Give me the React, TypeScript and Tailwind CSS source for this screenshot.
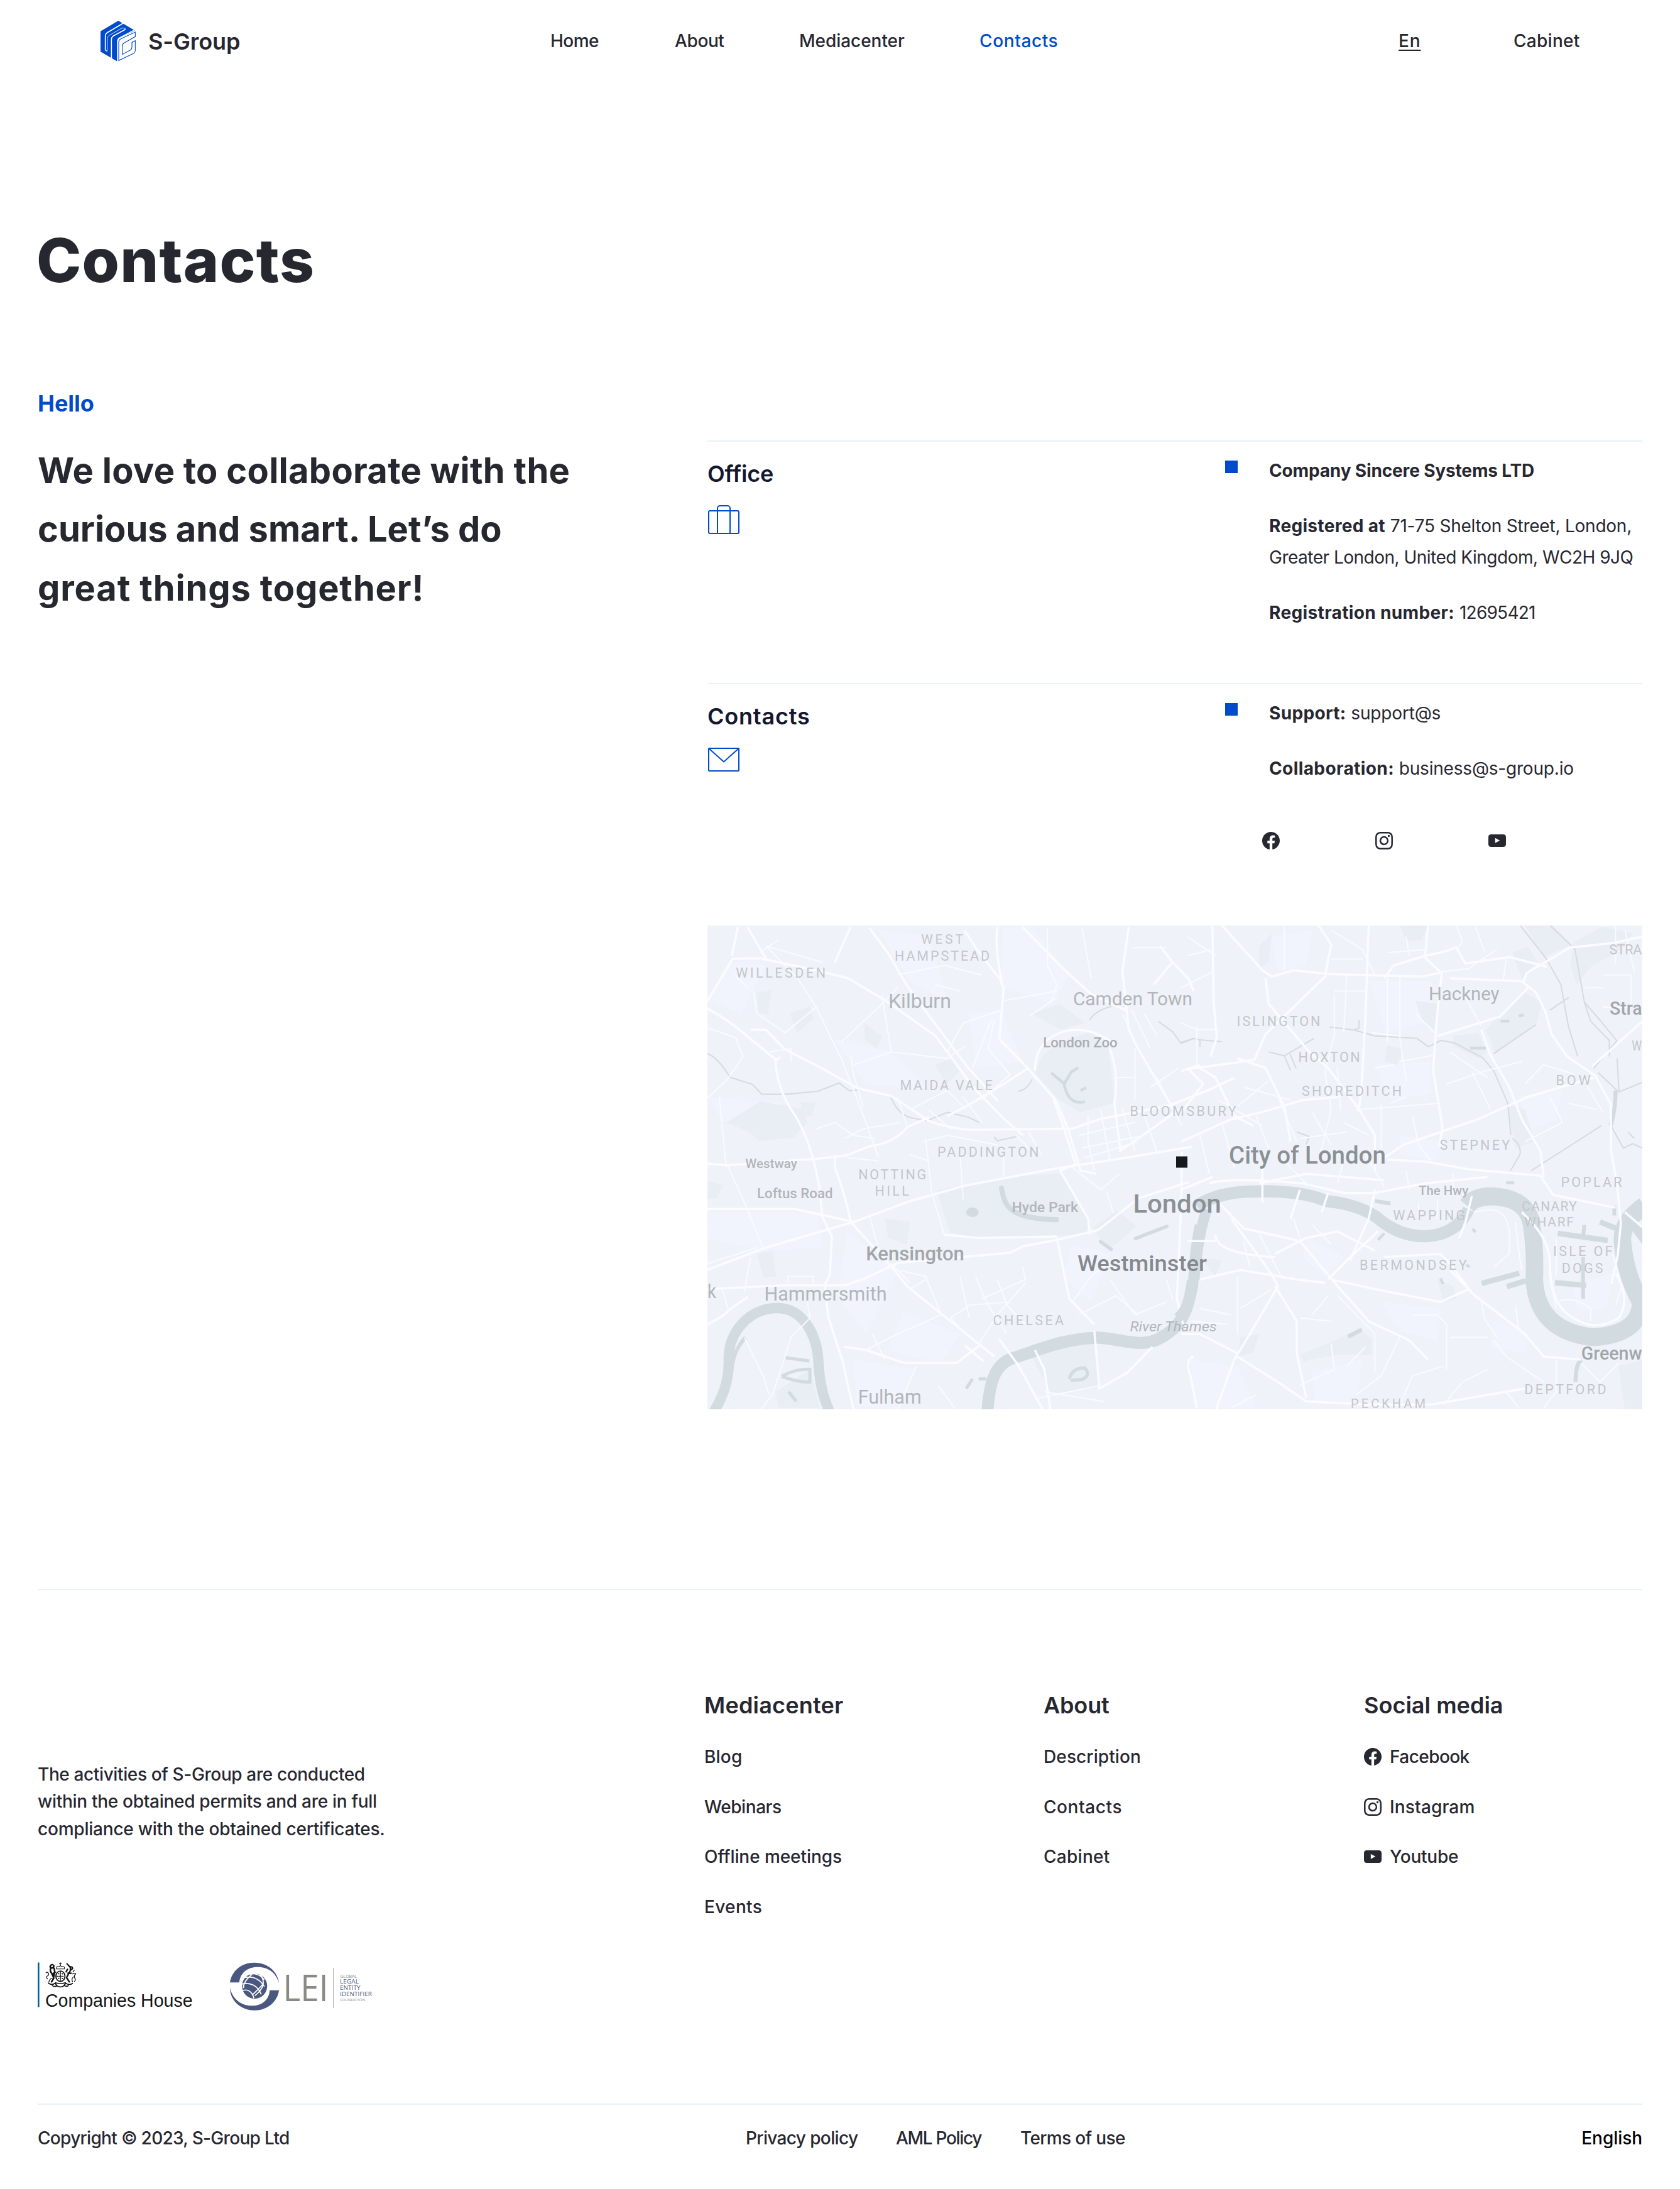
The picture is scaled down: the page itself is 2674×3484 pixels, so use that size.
import { BsFacebook, BsInstagram } from "react-icons/bs";

type Item = { text: string; cls: string };

function LogoMark() {
  return (
    <svg className="h-[65px] w-[56px]" viewBox="30 38 168 195" fill="none">
      <path d="M115 38L30 88v98l80 46v-97q0-8 7-12l78-38z" fill="#004bcb" />
      <path d="M138 50L62 95q-9 6-9 16v68M82 218v-90q0-12 10-18l57-31" stroke="#fff" strokeWidth="5" />
      <path d="M53 179l8 4" stroke="#fff" strokeWidth="4" />
      <path d="M112 232v-97q0-10 9-15l77-41" stroke="#fff" strokeWidth="5" />
      <path d="M62 184v-60q0-11 9-16l60-34q8-4 19 3" stroke="#fff" strokeWidth="2.5" />
      <path
        d="M117 228v-88q0-10 9-15l70-33v22l-53 30q-9 5-9 15v40l38-21q8-5 8-15v-21l16-9v47q0 9-8 14z"
        stroke="#004bcb"
        strokeWidth="3.2"
        fill="#fff"
      />
    </svg>
  );
}

function Youtube() {
  return (
    <svg className="h-[28px] w-[28px]" viewBox="0 0 28 28">
      <rect y="4" width="28" height="20" rx="4.2" fill="#272730" />
      <path d="M10.8 9.8v8l7.4-4z" fill="#fff" />
    </svg>
  );
}

function Social({ kind }: { kind: string }) {
  if (kind === "Facebook") return <BsFacebook className="size-[28px] text-[#272730]" />;
  if (kind === "Instagram") return <BsInstagram className="size-[28px] text-[#272730]" />;
  return <Youtube />;
}

function Suitcase() {
  return (
    <svg className="h-[46px] w-[50px]" viewBox="0 0 50 46" fill="none" stroke="#004bcb" strokeWidth="2">
      <rect x="1" y="9" width="48" height="36" rx="2" />
      <path d="M15 45V5a4 4 0 0 1 4-4h12a4 4 0 0 1 4 4v40" />
    </svg>
  );
}

function Envelope() {
  return (
    <svg className="h-[38px] w-[50px]" viewBox="0 0 50 38" fill="none" stroke="#004bcb" strokeWidth="2">
      <rect x="1" y="1" width="48" height="36" rx="1" />
      <path d="M1 1l24 21.500L49 1" />
    </svg>
  );
}

function CompaniesHouse() {
  return (
    <svg className="h-[80px] w-[250px]" viewBox="0 0 250 80">
      <rect y="0.500" width="2.600" height="71" fill="#00619f" />
      <g transform="scale(.3635 .3333) translate(-27.5 -70)" fill="none" stroke="#111" strokeLinecap="round">
        <path d="M110 102q-4-12 8-12 8 2 9-6 1 8 9 6 12 0 8 12zM127 72v14M122 77h10" strokeWidth="3" />
        <ellipse cx="127" cy="137" rx="20" ry="25" strokeWidth="5" />
        <path d="M127 116v42M112 137h30M118 123l4 6M134 123l4 6M118 146l5 6M134 146l4 5" strokeWidth="4" strokeDasharray="4 4" />
        <path d="M86 84q-8 8 0 14 12 0 12-10-4-10-12-4M84 100q-4 14 6 24l8 22-10 18M98 98q6 12 2 28l-4 22M104 118l-14 10" strokeWidth="7" />
        <path d="M70 150q-8-10 0-14 8-4 4-14-6-8-10-2M76 166q4-16 14-20" strokeWidth="3.500" />
        <path d="M156 78l12 14M168 92q12-2 12 8-4 8-10 6M170 96q4 14-6 26l-10 22 12 20M158 104l-6 12M160 122q8 4 14 0" strokeWidth="6.500" />
        <path d="M180 126q12-6 14 0-10 10-4 20 6 8-2 16M184 140q-10 8-4 24M188 108l-6 8" strokeWidth="3.500" />
        <path d="M74 170q16 12 30 0 8 18 23 18t23-18q14 12 30 2M92 182q12 8 20 0M144 182q10 6 18 0" strokeWidth="5" />
        <path d="M106 168q20 8 42 0" strokeWidth="5" />
      </g>
      <text x="12" y="71.300" fontSize="28.600" fill="#151515" textLength="234.500" lengthAdjust="spacingAndGlyphs" className="font-['Liberation_Sans']">
        Companies House
      </text>
    </svg>
  );
}

function Lei() {
  return (
    <svg className="h-[80px] w-[232px]" viewBox="0 0 232 80">
      <g transform="scale(.3635 .3333) translate(-869 -70)">
        <g fill="#4a577f">
          <path d="M869 167C877 110 920 72 976 72c58 0 102 42 108 98-14-48-44-77-94-77-46 0-77 30-80 74z" />
          <path d="M1084 204c-8 56-51 96-108 96-58 0-107-46-107-108 10 50 46 86 96 86 46 0 76-30 78-74z" />
          <ellipse cx="977" cy="184" rx="55" ry="60" />
        </g>
        <g fill="none" stroke="#fff" strokeWidth="5">
          <path d="M926 146c36-14 70 0 94 40M918 176c40-14 74 8 88 48M924 206c22-10 42 4 50 36M955 128c14-6 44-4 64 26M1000 124c26 40 18 72-22 106M966 128c-24 20-38 40-38 66M1016 170c-14 22-34 40-50 58" />
        </g>
      </g>
      <text x="84.500" y="62" fontSize="59" fill="#898985" textLength="72" lengthAdjust="spacingAndGlyphs" className="font-['Open_Sans'] font-normal">
        LEI
      </text>
      <rect x="164" y="9" width="1" height="64" fill="#a9a9a9" />
      <g className="font-['Open_Sans']">
        <text x="175.500" y="24.500" fontSize="6.600" fill="#8d8d8d" textLength="26.500" lengthAdjust="spacingAndGlyphs">GLOBAL</text>
        <text x="175" y="34.300" fontSize="9.800" fill="#4a577f" textLength="30" lengthAdjust="spacingAndGlyphs">LEGAL</text>
        <text x="175" y="44.300" fontSize="9.800" fill="#4a577f" textLength="32.500" lengthAdjust="spacingAndGlyphs">ENTITY</text>
        <text x="175" y="54.300" fontSize="9.800" fill="#4a577f" textLength="51" lengthAdjust="spacingAndGlyphs">IDENTIFIER</text>
        <text x="175.500" y="61.800" fontSize="6" fill="#8d8d8d" textLength="39.500" lengthAdjust="spacingAndGlyphs">FOUNDATION</text>
      </g>
    </svg>
  );
}

/* Label: text, left, right, baseline, cap height, colour, weight */
type Label = [string, number, number, number, number, string, number];

const westLabels: Label[] = [
  ["WEST", 698, 828, 83, 29, "#c3c6ca", 400],
  ["HAMPSTEAD", 613, 913, 135, 30, "#c3c6ca", 400],
  ["WILLESDEN", 105, 388, 189, 30, "#c3c6ca", 400],
  ["Kilburn", 593, 790, 282, 43, "#b2b5ba", 400],
  ["Camden Town", 1184, 1562, 274, 42, "#b2b5ba", 400],
  ["London Zoo", 1088, 1322, 406, 32, "#aaaeb2", 500],
  ["MAIDA VALE", 630, 922, 539, 30, "#c3c6ca", 400],
  ["BLOOMSBURY", 1366, 1702, 620, 30, "#c3c6ca", 400],
  ["PADDINGTON", 750, 1070, 746, 30, "#c3c6ca", 400],
  ["NOTTING", 497, 710, 817, 30, "#c3c6ca", 400],
  ["HILL", 550, 655, 868, 30, "#c3c6ca", 400],
  ["Westway", 135, 297, 783, 28, "#b2b5ba", 500],
  ["Loftus Road", 173, 411, 876, 32, "#b2b5ba", 500],
  ["Hyde Park", 988, 1196, 920, 32, "#b2b5ba", 500],
  ["London", 1376, 1654, 922, 56, "#8b9095", 500],
  ["Kensington", 521, 832, 1070, 44, "#a2a6ab", 500],
  ["Westminster", 1198, 1608, 1103, 50, "#85898e", 500],
  ["k", 14, 38, 1188, 44, "#b2b5ba", 400],
  ["Hammersmith", 196, 584, 1196, 44, "#b2b5ba", 400],
  ["CHELSEA", 928, 1150, 1272, 30, "#c3c6ca", 400],
  ["Fulham", 496, 695, 1518, 44, "#b2b5ba", 400],
];

const eastLabels: Label[] = [
  ["STRA", 1372, 1472, 116, 30, "#c3c6ca", 400],
  ["Hackney", 794, 1016, 258, 42, "#b2b5ba", 400],
  ["Stra", 1373, 1473, 304, 42, "#a2a6ab", 500],
  ["ISLINGTON", 180, 443, 339, 30, "#c3c6ca", 400],
  ["W", 1444, 1472, 415, 30, "#c3c6ca", 400],
  ["HOXTON", 377, 570, 450, 30, "#c3c6ca", 400],
  ["SHOREDITCH", 388, 704, 556, 30, "#c3c6ca", 400],
  ["BOW", 1201, 1308, 524, 30, "#c3c6ca", 400],
  ["STEPNEY", 829, 1050, 725, 30, "#c3c6ca", 400],
  ["City of London", 155, 653, 769, 54, "#8b9095", 500],
  ["POPLAR", 1217, 1408, 840, 30, "#c3c6ca", 400],
  ["The Hwy", 762, 917, 867, 28, "#b2b5ba", 500],
  ["WAPPING", 680, 907, 945, 30, "#c3c6ca", 400],
  ["CANARY", 1092, 1264, 916, 29, "#c3c6ca", 400],
  ["WHARF", 1100, 1254, 964, 29, "#c3c6ca", 400],
  ["ISLE OF", 1192, 1378, 1057, 30, "#c3c6ca", 400],
  ["DOGS", 1220, 1348, 1110, 30, "#c3c6ca", 400],
  ["BERMONDSEY", 573, 912, 1100, 30, "#c3c6ca", 400],
  ["Greenw", 1282, 1473, 1379, 42, "#a2a6ab", 500],
  ["DEPTFORD", 1100, 1358, 1488, 30, "#c3c6ca", 400],
  ["PECKHAM", 545, 780, 1530, 28, "#c3c6ca", 400],
];

function Labels({ items, shift }: { items: Label[]; shift: number }) {
  return (
    <>
      {items.map(([text, x0, x1, y, cap, fill, weight]) => (
        <text
          key={text}
          x={x0 / 2.0103 + shift - 1}
          y={y / 1.96 - 13}
          fontSize={cap / 1.96 / 0.711}
          fontWeight={weight}
          fill={fill}
          textLength={(x1 - x0) / 2.0103 + 2}
          lengthAdjust={text.length > 2 && text === text.toUpperCase() ? "spacing" : "spacingAndGlyphs"}
        >
          {text}
        </text>
      ))}
    </>
  );
}

function CityMap() {
  return (
    <svg className="block h-[770px] w-[1488px] bg-[#eff3f9] font-['Roboto']" viewBox="0 0 1488 770">
      {/* western half */}
      <g transform="translate(-6 -13) scale(.49744 .5102)">
        <g fill="#f1f4fd">
          <path d="M90 140L200 150 120 300 20 260zM420 380l180 40 120 120-200-20zM560 40l160 20 60 200-120-60zM20 920h340l20 110-180 10-190-40zM460 980l160 120-100 200-90-120zM640 1230l180 70-60 90-170-40zM960 30h90l120 150-60 90-160-60zM850 300l100-10 70 160-150 20zM1180 1020l120 30-60 150-90-80zM20 560l230 20-190 60zM480 1380l200 30-60 130-130-20z" />
        </g>
        <g fill="#e9edf4">
          <path d="M745 852L950 812l190-14 95 142-12 50-350 12-85-20zM1085 430l60-42 90-30 60 50 20 170-110 30-70-40-75-85zM72 640l110-66 140 26 10 40-45 48-110 10-30-28zM1245 968l80-52 60 48-90 76zM1050 1372l205-55 8 150-150 20zM170 235l46-8-10 78-30-10zM275 300l65-22 10 40-50 42zM515 330l55 40-15 40-40-30zM740 460l60-20 18 40-40 40zM580 940l80 10-10 70-60-20zM170 1050l50-10 12 80-40 5zM230 1480l110-70 30 120H240zM1050 300l90-30 80 60-80 20zM310 575l50 4-15 42-30-6zM12 820l50 16-20 40-30 4z" />
        </g>
        <g fill="none" stroke="#d2dbe0">
          <path d="M22 1560C60 1500 82 1450 80 1380 78 1290 150 1219 235 1219 318 1219 358 1300 366 1370 370 1450 380 1500 412 1560" strokeWidth="33" />
          <path d="M88 1430c2-60 20-90 46-120" strokeWidth="12" />
          <path d="M906 1570c6-110 20-175 84-195 90-28 160-60 270-64 80 4 140 34 200 2 60-32 90-70 105-180" strokeWidth="38" />
          <path d="M1566 1160q-2-90 20-200" strokeWidth="30" />
          <path d="M953 845c10 60 30 95 176 98" strokeWidth="16" strokeLinecap="round" />
          <path d="M1112 485l42 34 22-36 22-14M1152 515c8 42 26 70 68 60M1206 540l18-8" strokeWidth="9" />
          <path d="M1382 1002l100-38M1270 1012l34 24" strokeWidth="11" strokeLinecap="round" />
          <path d="M250 1432q44-24 90-22v40q-40 0-90-18M262 1374l76 10M1170 1440q10-36 50-34 20 24-10 36l-36 2M880 1440l24 0M840 1470l20-30M272 1480l24 30" strokeWidth="10" />
        </g>
        <ellipse cx="860" cy="920" rx="20" ry="15" fill="#d2dbe0" />
        <g fill="none" stroke="#d6dbe1" strokeWidth="4">
          <path d="M12 425q34 12 72 74l72 22 30 31h76l102-9 70-26 32 24 32-3M598 558q20 52 60 66l56 11 66-27 68 16 34 16M930 685l10 12 65-14M1005 543q30-4 46-38M1235 320q20-30 70-42M1455 325l46 32 26 36 40-14" />
        </g>
        <g fill="none" stroke="#fafcff" strokeWidth="7" strokeLinejoin="round">
          <path d="M12 285q60 30 120 80l100 80 12-8M12 262L92 130l90-2 190 40 90 22 120 70 160 110 120 160 100 100 60 50M150 350l50 2 60 60 120 60 110 60 110 25 120 78q80 28 150 28l310-4 90-30 220-42 130-50 78-36" />
          <path d="M12 768l60 6 280-20 100-10 80-30q80-10 120-60l70-30M230 440q0 80 50 160 60 80 90 240l10 95 30 60-6 120-16 30 10 100 50 150q10 60 40 170M12 910l280 0 190 40 170-62 180-50 280-52 200-30 250-40" />
          <path d="M420 740v40q40 110 50 170l140 150 40 50 140 110 140 110M12 1160l250-12 190 0 60-20 110-50 360-32 40-20 110-20 130-30 130-100 160-50M530 32l60 80 60 100 60 80 130 170 100 110M950 200l10 20-14 160 90 90 90 100 40 90 40 130 50 10M12 1270q60-30 70-46l60-40" />
          <path d="M1040 470l-80 50-120 70-60 30M940 30q-10 60 14 170l-80-100-40-60M1300 410q30 80 14 170l20 150M1120 570l30 80 40 120-50 20M1140 790l90 150 6 50M770 990l110 10 250-4M450 1340l70 10 120 40 170 0 80-60M1360 30l-20 140 20 180 30 60 120 200M1020 30l130 130 90 80 110 50M1490 130l60 60 18 40M1460 90l40 50-60 70M1520 600l-100 70-90 60" />
          <path d="M835 1335l60 50M945 1315l60 80 80 140M1060 1350l30 60 20 130M1250 1290l16 180 90-50 80-80M90 120l20-90M200 130l-60-100M420 140l50-110M1130 1000l40 190 80 80M1060 480q0-90 80-120 90-30 180 40M1530 730q0 140-8 300l-8 160 20 80M480 950l-280 80-190 70" />
        </g>
        <g fill="none" stroke="#f8fbff" strokeWidth="4" strokeLinejoin="round">
          <path d="M12 345l90 30 24 60-50 70-64 60M50 560l20 200 60 130 60 140M160 230l10 70 90 60 100-80-60-90-100-100M360 280l80 160 60 150 60 160M480 460l120-40 180 20 60-40M600 420l-30-180M440 390l120-110 60-60M620 180l150-30 120 30M740 210l80 20M700 700l80-20 160 30M710 690l20 170 40 130M830 880l-10-150M930 320l-20 90 70 80-90 80M860 470l60-150M780 420l50-90 120-40M960 260l170-30M1040 310l90-60" />
          <path d="M1100 30v120l30 60-20 60M1210 30l30 160M1370 95h110M1380 410v160M1320 500h60M1230 620v80l20 90M1270 600l30 160M1200 680l180-40M1210 720l200-40M1220 750l170-50M1340 600l40 130M1400 590l50 140M1450 500l80 150M1520 470l-90 60M1340 300l60 130M1370 290l60 120M1410 300l40 70M1180 780l90 70 60-50M1290 860l20 60" />
          <path d="M660 1160l50-30M620 1100l90 20 50 120-140 60-100 50M870 1120l40 90 60 90M940 1130l30 80 60 60M890 1190l140-60-10-40M1030 1140l-90 100-60 90M850 1310l-60-60 60-40 130-10M1180 1200l60-80 80-60M1200 1240l120-60 70 60M1300 1130l80 110 100-40M1480 1130l20 60M820 1120l30 130M330 1190l10 60-60 60-60 180-40 50M130 1310l60 120 20 60M60 1160l20 70M12 1080l160-50M150 1060l-20 110M530 930l40 140M600 1080l60 60M270 1140v-20h80v20M450 690l60-30 120-20M360 660l60-20 60 40 70 10M560 760l-100-10" />
          <path d="M470 430l10 60 30 100M200 90l180 50M240 70l-60 40M100 180l40 40M210 420l70-10v40M620 560l30 90M660 600l120-60 60 60M720 600l70 60M830 560l60 80M1000 680l60 60M1040 670l40 70M960 740v70M660 740l60 20M750 1460l60 80M680 1400l-60 140M580 1380l-40-80M1070 1500l200-40M1090 1480l190 30" />
        </g>
      </g>
      {/* eastern half */}
      <g transform="translate(754 -13) scale(.49744 .5102)">
        <g fill="#f1f4fd">
          <path d="M290 60l130-20-20 110-90 20zM600 200h200l10 120-150 40zM620 460l180-10v100l-130 20zM1080 560l140-20-20 90-80 30zM700 680l140 20-20 60-120-20zM400 1000l120 60-60 60-70-60zM640 1200l190 20-10 100-120-30zM30 1380l150 20 60 130H50zM1000 1260l110 40-10 60-110-20zM420 1420l160-40-20 130-130 10zM1250 1150l130-40-20 110-90 10z" />
        </g>
        <g fill="#e9edf4">
          <path d="M700 25h90l-20 44-50 6zM975 350l60-60 60-60 60 36-20 70-130 90zM870 370l80-10 30 60-30 20-80-40zM1060 110l50-20 30 50-50 50zM1255 80l90-50 100 20-50 60-80 40-50 60-20-60zM750 260l70 10-10 80-40-30zM1040 580l60 20 30 100-60 20zM380 1365l100-40 90-40 40 30v50l-120 0-100 20zM1400 1400l80-20v160h-60zM820 1130l50 20 10 40-40 10zM250 90l40-40-10 90-30 20zM660 400l50 10-20 50-40-10zM60 1060l70 10-20 50zM190 1310l60-10-20 60-50 10zM1100 25h90l60 60-90 40z" />
        </g>
        <g fill="none" stroke="#d2dbe0">
          <path d="M50 900q70-45 190-45 140-4 225 30 100 10 160 50 70 60 155 60 100-4 140-84" strokeWidth="38" />
          <path d="M42 1130q10-130 40-220" strokeWidth="34" />
          <path d="M-10 1250q50-50 50-140" strokeWidth="32" />
          <path d="M915 900q30-36 100-28 90 10 105 80 14 80 10 180 10 160 190 178 150-10 150-110-50-90-58-190-4-60 70-110" strokeWidth="56" />
          <path d="M1434 940l60 80" strokeWidth="30" />
          <path d="M962 1142l120-32M1042 1152l60-18M1196 1140l100 8M1205 986l160 22M1340 950l50 20" strokeWidth="17" />
          <path d="M1286 1060v130M1290 960l-4 40M620 885l50 8M1386 900v30" strokeWidth="12" />
          <path d="M1262 1450q0-60 20-70M1390 540q0 60-16 110M534 1308l44-22" strokeWidth="13" />
          <path d="M630 1006l20-20M830 1126l8 18M925 408h50M1022 324h28M1080 308l16-4M932 972l10 10M1040 828h26M912 1085l12 5" strokeWidth="9" />
        </g>
        <g fill="none" stroke="#d6dbe1" strokeWidth="4">
          <path d="M475 342l80 10 65 18 135 8 36 26 40-20 44 8 90 46 36 42 44 100 10 100M555 350l14-4v-26M280 420l50 12 95-54M330 432l20 45M348 426l20 45M0 390l40-12 20 4 70 6M60 380v24M1000 425l135-90M1085 25l84 105 46 80 24 130 30 94M1180 25l80 74 30 165 58 66 46 55-74 86M1335 485l60 55-20 110 40 70 30-14 30 14M1395 440l6 105 74-30M1430 670l20 20M1120 790l225-140M1060 690q30 20 24 50l-30 50M370 670l40 14-10 24M1290 264l20 60 60 60 0 50M1240 250l-60 40" />
        </g>
        <g fill="none" stroke="#fafcff" strokeWidth="7" strokeLinejoin="round">
          <path d="M130 25l130 140 30 20 70-20 110 12 300 8 66-14M100 25l4 240 10 110-20 60M600 25l-10 280-14 240-8 60M440 25l40 60-20 100-190 180-36 80-220 30M0 480l60-20M270 190l10 80 130 150 60 50 100 130 50 80 0 110" />
          <path d="M650 190l30-40 100-30 60-12 40-14 30 50 140-20 120 30M790 25l-10 100 54 50-14 120-14 180 30 180-10 60M820 370l200-60 90-90M1475 60l-90 20-140 14-140 80-10 30 40 30 30 60 20 70 50 70 90 60 50 90 0 140 20 110 12 120-10 100-20 90" />
          <path d="M1100 200l-240-10M1475 325l-160 140M650 750l60-40 240-80 160-70 210-60M660 756l120 6 140 24 230 20 40 60 200 40M960 350l30 80 60 100 40 100 60 100 10 80M180 440l90 30 60 120 20 110M0 610l70-90-50-50M60 470l50 30 60 120 60 30M0 700l160-70 90-20 140-40 120-10M90 830q60-20 300 0l130 30 100 0 160-30 200-20M260 780v110M380 850l-30 90M470 860l-20 60M620 850l-20 90-60 130" />
          <path d="M930 870l-20 80-20 50M0 850l100-40M110 880l90 90 180 40 120 140 100 110 130 60 60 60M160 940l120 160 30 50-60 100-80 130-60 160M180 1370l130 80 90 60 200 10 200 0 300-50M60 1130l130-30 180 30 90 10M300 1050l100-50 100-20 120 60M470 1130l60-60 100-90M480 1130l140 30 210 40 90-40-60-80-30-30-180 10M860 1100l80 80 160 120 60 70 120 10M300 1150l70 110 0 100 30 140M110 990q0 60 190 70M20 1010l90 0M1420 920l60 50M1090 920q90 80 90 160 0 120 60 160 80 60 160 10 40-60-10-140M40 1370q-30 10-10 60l20 100M0 1300l60 0 120 60M250 830l150-30 250 20" />
        </g>
        <g fill="none" stroke="#f8fbff" strokeWidth="4" strokeLinejoin="round">
          <path d="M50 340v120M50 350h70M330 25v140M490 230h100M490 240v130l-30 110M660 190v200M700 180v200l20 130M480 40l100 60 40 80M480 130h100M660 110l130-10M530 180l-10 180M610 360l90 10M720 60l10 60M880 25l20 50-20 30M940 25l30 80M1040 130l-10 70M830 170l90-10 90-60M900 230l60 110M750 300l60 60M860 420l120 80M700 450l110-20M620 470l60-10M640 580l0 180M740 620l20 90 40 50M560 600l270-20M720 560l-50 20M850 520l120-40 120-30M930 480l60 120M1100 520l60-60 100 30M1180 560l40 80-120 60M1290 510l60 100M1240 580l90 20" />
          <path d="M180 590l100-80M200 530l150 40M120 570l140 80M240 620l40 100M60 680l30 120M130 640l40 140M310 560l60 140M460 480l20 120-40 160M500 470l10 130M380 690l150-20M420 610l60 100M520 640l80 40M340 770l60 60M520 760l-20 70M590 740l60 100M720 790l10 60M760 890v50M820 880v60M870 800v60" />
          <path d="M190 1220l100-60M180 1120v180M200 1010l20 80M250 990l70 130M360 940l20 60M420 960l60 60M500 1180l60 60 60 60v120M470 1180l-50 60M380 1250l100 10M740 1240h80l30 30v140M700 1310l-60 120-80 60M860 1310h120M960 1190l10 60 40 60M1070 1210l10 80M840 1400l-100 30-40 90M1000 1320l40 50 120 80M1040 1480l40 50M1200 1380v100l-40 50M1280 1390l60 60 60-60M980 1410l-80 40-60 70M480 1330l10 80-110 50M940 920q100-30 110 60v70l-50 40M1070 950q10 100 20 150M1200 1000v120M1180 1130l20 90M1380 1050l30 100-20 60M1200 1200q60-20 110 20v40M1350 180h90v100h-90M1390 25v120M1420 40l30 130M1290 220h60M530 1400l60-60M240 1490l-80 40M60 1220l100 20M30 1260l120 10M20 120l80-20M0 220l100-50M20 60l90 60M0 330l50 20" />
        </g>
      </g>
      <Labels items={westLabels} shift={-6} />
      <Labels items={eastLabels} shift={754} />
      <text x="672.500" y="645.500" fontSize="22" fontStyle="italic" fill="#b2b5ba" textLength="138" lengthAdjust="spacingAndGlyphs">
        River Thames
      </text>
      <rect x="746" y="367.500" width="18" height="18" fill="#14191c" />
    </svg>
  );
}

const footerColumns: { title: Item; links: Item[]; social?: boolean }[] = [
  {
    title: { text: "Mediacenter", cls: "tracking-[0.0056em]" },
    links: [
      { text: "Blog", cls: "tracking-[0.007em]" },
      { text: "Webinars", cls: "tracking-[-0.0156em]" },
      { text: "Offline meetings", cls: "tracking-[-0.0024em]" },
      { text: "Events", cls: "tracking-[0.012em]" },
    ],
  },
  {
    title: { text: "About", cls: "tracking-[-0.004em]" },
    links: [
      { text: "Description", cls: "tracking-[0.004em]" },
      { text: "Contacts", cls: "tracking-[0.021em]" },
      { text: "Cabinet", cls: "tracking-[0.010em]" },
    ],
  },
  {
    title: { text: "Social media", cls: "tracking-[0.001em]" },
    social: true,
    links: [
      { text: "Facebook", cls: "tracking-[-0.020em]" },
      { text: "Instagram", cls: "tracking-[0.006em]" },
      { text: "Youtube", cls: "tracking-[-0.0088em]" },
    ],
  },
];

export default function App() {
  return (
    <div className="h-[3484px] w-[2674px] overflow-hidden bg-white font-['Inter',sans-serif] text-[28px] whitespace-nowrap text-[#272730]">
      <header className="grid h-[130px] grid-cols-[716px_1350px_183px_auto] items-center pl-[160px] leading-[34px] font-medium">
        <a className="flex items-center gap-[20px] text-[36px] leading-[44px] font-semibold">
          <LogoMark />
          <span className="pt-[2px] tracking-[-0.003em]">S-Group</span>
        </a>
        <nav className="grid grid-cols-[198px_198px_287px_auto]">
          <a className="tracking-[-0.019em]">Home</a>
          <a className="tracking-[-0.014em]">About</a>
          <a className="tracking-[-0.0015em]">Mediacenter</a>
          <a className="tracking-[0.022em] text-[#004bcb]">Contacts</a>
        </nav>
        <a className="tracking-[0.03em] underline decoration-2 underline-offset-[4px]">En</a>
        <a className="tracking-[0.010em]">Cabinet</a>
      </header>

      <main className="px-[60px]">
        <h1 className="mt-[226px] -ml-[2px] text-[96px] leading-[116px] font-extrabold tracking-[0.0125em]">Contacts</h1>

        <div className="mt-[148px] grid grid-cols-[1066px_1488px]">
          <div>
            <h2 className="text-[36px] leading-[44px] font-bold text-[#004bcb]">Hello</h2>
            <p className="mt-[38.500px] text-[56px] leading-[93.500px] font-bold">
              <span className="block tracking-[0.005em]">We love to collaborate with the</span>
              <span className="block tracking-[-0.0006em]">curious and smart. Let’s do</span>
              <span className="block tracking-[0.0155em]">great things together!</span>
            </p>
          </div>

          <div className="pt-[81px]">
            <section className="flex h-[386px] border-t-2 border-[#e6f2f6]">
              <div className="w-[824px] pt-[29px]">
                <h3 className="text-[36px] leading-[44px] font-semibold tracking-[-0.004em] text-[#14172e]">Office</h3>
                <div className="mt-[28px] ml-px"><Suitcase /></div>
              </div>
              <div className="mt-[30px] size-[20px] bg-[#004bcb]" />
              <div className="ml-[50px] space-y-[37.400px] pt-[21px] leading-[50.400px]">
                <p className="font-bold tracking-[-0.0055em]">Company Sincere Systems LTD</p>
                <p>
                  <span className="block">
                    <b className="tracking-[0.012em]">Registered at</b> <span className="tracking-[-0.008em]">71-75 Shelton Street, London,</span>
                  </span>
                  <span className="block tracking-[-0.018em]">Greater London, United Kingdom, WC2H 9JQ</span>
                </p>
                <p>
                  <b className="tracking-[0.013em]">Registration number:</b> <span className="tracking-[-0.027em]">12695421</span>
                </p>
              </div>
            </section>

            <section className="flex h-[386px] border-t-2 border-[#e6f2f6]">
              <div className="w-[824px] pt-[29px]">
                <h3 className="text-[36px] leading-[44px] font-semibold tracking-[0.022em] text-[#14172e]">Contacts</h3>
                <div className="mt-[28px] ml-px"><Envelope /></div>
              </div>
              <div className="mt-[30px] size-[20px] bg-[#004bcb]" />
              <div className="ml-[39px] pt-[21px] leading-[50.400px]">
                <div className="space-y-[37.400px] pl-[11px]">
                  <p>
                    <b className="tracking-[0.012em]">Support:</b> <span className="tracking-[-0.006em]">support@s</span>
                  </p>
                  <p>
                    <b className="tracking-[0.0145em]">Collaboration:</b> <span className="tracking-[-0.007em]">business@s-group.io</span>
                  </p>
                </div>
                <div className="mt-[75.500px] flex gap-[152px]">
                  <Social kind="Facebook" />
                  <Social kind="Instagram" />
                  <Social kind="Youtube" />
                </div>
              </div>
            </section>

            <CityMap />
          </div>
        </div>
      </main>

      <footer className="mx-[60px] mt-[286px] border-t-2 border-[#e6f2f6] font-medium">
        <div className="grid h-[817px] grid-cols-[1061px_540px_510px_auto] pt-[161px]">
          <div className="pt-[111px]">
            <p className="leading-[43.400px]">
              <span className="block tracking-[-0.0135em]">The activities of S-Group are conducted</span>
              <span className="block tracking-[-0.0105em]">within the obtained permits and are in full</span>
              <span className="block tracking-[-0.0075em]">compliance with the obtained certificates.</span>
            </p>
            <div className="mt-[190px] flex gap-[56px]">
              <CompaniesHouse />
              <Lei />
            </div>
          </div>
          {footerColumns.map((col) => (
            <div key={col.title.text}>
              <h4 className="text-[36px] leading-[44px] font-semibold">
                <span className={col.title.cls}>{col.title.text}</span>
              </h4>
              <ul className="mt-[43px] space-y-[45.700px] leading-[34px]">
                {col.links.map((l) => (
                  <li key={l.text} className="flex items-center gap-[13px]">
                    {col.social && <Social kind={l.text} />}
                    <span className={l.cls}>{l.text}</span>
                  </li>
                ))}
              </ul>
            </div>
          ))}
        </div>

        <div className="flex border-t-2 border-[#e8f1f9] pt-[36px] leading-[34px]">
          <span className="w-[1127px] tracking-[-0.0245em]">Copyright © 2023, S-Group Ltd</span>
          <span className="w-[239px] tracking-[-0.0225em]">Privacy policy</span>
          <span className="w-[198px] tracking-[-0.047em]">AML Policy</span>
          <span className="tracking-[-0.0229em]">Terms of use</span>
          <span className="ml-auto tracking-[-0.002em] text-black">English</span>
        </div>
      </footer>
    </div>
  );
}
